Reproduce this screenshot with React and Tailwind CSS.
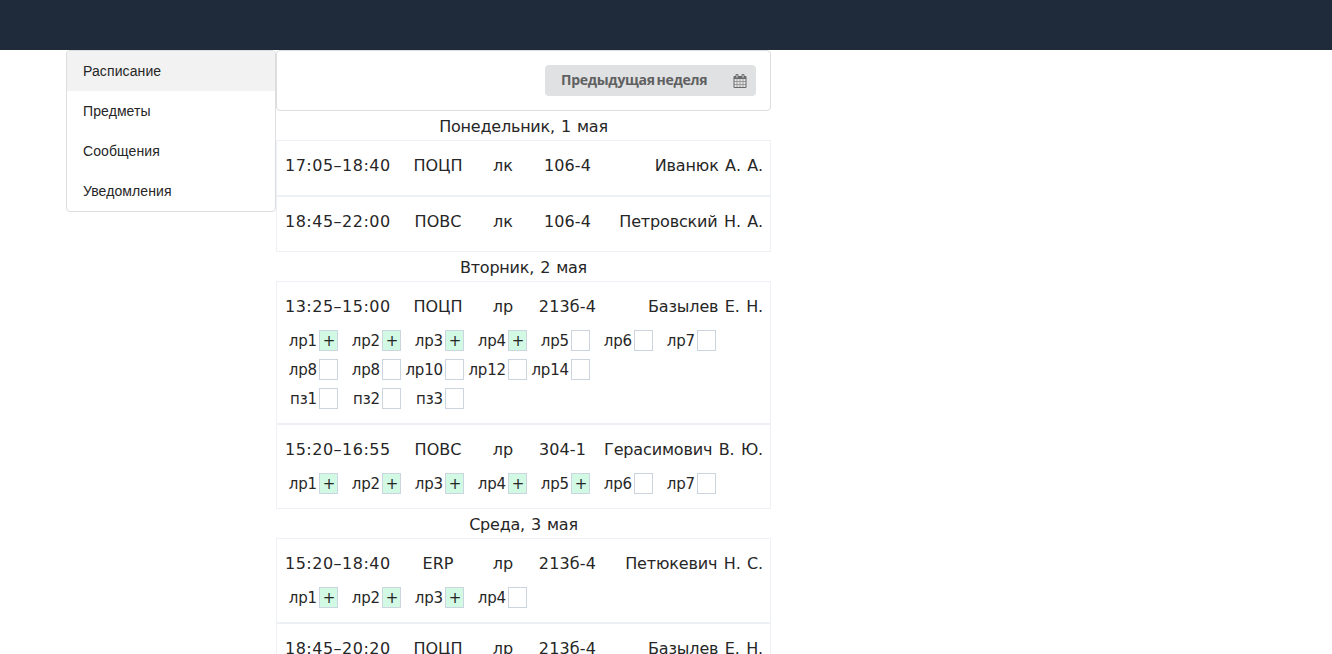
const CALENDAR =
  'M192 1664h288v-288h-288v288zm352 0h320v-288h-320v288zm-352-352h288v-320h-288v320zm352 0h320v-320h-320v320zm-352-384h288v-288h-288v288zm736 736h320v-288h-320v288zm-384-736h320v-288h-320v288zm768 736h288v-288h-288v288zm-384-352h320v-320h-320v320zm-352-864v-288q0-13-9.500-22.500t-22.500-9.500h-64q-13 0-22.500 9.500t-9.500 22.500v288q0 13 9.500 22.500t22.500 9.500h64q13 0 22.500-9.500t9.500-22.500zm736 864h288v-320h-288v320zm-384-384h320v-288h-320v288zm384 0h288v-288h-288v288zm32-480v-288q0-13-9.500-22.500t-22.500-9.500h-64q-13 0-22.500 9.500t-9.500 22.500v288q0 13 9.500 22.500t22.500 9.500h64q13 0 22.500-9.500t9.500-22.500zm384-64v1280q0 52-38 90t-90 38h-1408q-52 0-90-38t-38-90v-1280q0-52 38-90t90-38h128v-96q0-66 47-113t113-47h64q66 0 113 47t47 113v96h384v-96q0-66 47-113t113-47h64q66 0 113 47t47 113v96h128q52 0 90 38t38 90z';

const MENU = ['Расписание', 'Предметы', 'Сообщения', 'Уведомления'];

const DAYS = [
  {
    title: 'Понедельник, 1 мая',
    lessons: [
      { time: '17:05–18:40', subject: 'ПОЦП', type: 'лк', room: '106-4', teacher: 'Иванюк А. А.' },
      { time: '18:45–22:00', subject: 'ПОВС', type: 'лк', room: '106-4', teacher: 'Петровский Н. А.' },
    ],
  },
  {
    title: 'Вторник, 2 мая',
    lessons: [
      {
        time: '13:25–15:00', subject: 'ПОЦП', type: 'лр', room: '213б-4', teacher: 'Базылев Е. Н.',
        works: [
          ['лр1+', 'лр2+', 'лр3+', 'лр4+', 'лр5', 'лр6', 'лр7'],
          ['лр8', 'лр8', 'лр10', 'лр12', 'лр14'],
          ['пз1', 'пз2', 'пз3'],
        ],
      },
      {
        time: '15:20–16:55', subject: 'ПОВС', type: 'лр', room: '304-1', teacher: 'Герасимович В. Ю.', narrow: true,
        works: [['лр1+', 'лр2+', 'лр3+', 'лр4+', 'лр5+', 'лр6', 'лр7']],
      },
    ],
  },
  {
    title: 'Среда, 3 мая',
    lessons: [
      {
        time: '15:20–18:40', subject: 'ERP', type: 'лр', room: '213б-4', teacher: 'Петюкевич Н. С.',
        works: [['лр1+', 'лр2+', 'лр3+', 'лр4']],
      },
      { time: '18:45–20:20', subject: 'ПОЦП', type: 'лр', room: '213б-4', teacher: 'Базылев Е. Н.' },
    ],
  },
];

function Work({ value }) {
  const done = value.endsWith('+');
  return (
    <div className="flex h-[21px] w-[61px] shrink-0 items-center justify-end gap-[2px] whitespace-nowrap text-[15px] leading-[21px]">
      <span className="pt-[2px] tracking-[-0.15px]">{done ? value.slice(0, -1) : value}</span>
      <span className={`h-[21px] w-[19px] shrink-0 border border-[#cbd5e0] pl-px text-center leading-[21px] ${done ? 'bg-[#d2f9e3]' : 'bg-white'}`}>
        {done ? '+' : ''}
      </span>
    </div>
  );
}

function Lesson({ lesson }) {
  return (
    <div className={`border border-[#edf0f5] pt-[13px] ${lesson.works ? 'pb-[14px]' : 'pb-[17px]'}`}>
      <div className="flex h-6 items-center whitespace-nowrap pl-2 pr-[7px] leading-6">
        <span className="w-[107px] shrink-0 tracking-[0.5px]">{lesson.time}</span>
        <span className="ml-[14px] w-16 shrink-0 text-center">{lesson.subject}</span>
        <span className="ml-[17px] w-8 shrink-0 text-center">{lesson.type}</span>
        <span className={`ml-[19px] shrink-0 text-center tracking-[0.15px] ${lesson.narrow ? 'w-[49px]' : 'w-[59px]'}`}>{lesson.room}</span>
        <span className="ml-auto tracking-[-0.15px] [word-spacing:1.5px]">{lesson.teacher}</span>
      </div>
      {lesson.works && (
        <div className="mt-[11px] flex flex-col gap-2">
          {lesson.works.map((row, i) => (
            <div key={i} className="flex h-[21px] gap-[2px]">
              {row.map((value, j) => <Work key={j} value={value} />)}
            </div>
          ))}
        </div>
      )}
    </div>
  );
}

export default function App() {
  return (
    <div className="h-[654px] w-full overflow-hidden bg-white text-[#262626]">
      <header className="h-[50px] bg-[#1f2b3a]" />
      <div className="flex items-start pl-[66px]">
        <nav className="w-[210px] shrink-0 overflow-hidden rounded border border-[#dcddde] font-['Liberation_Sans',sans-serif] text-sm tracking-[0.1px]">
          {MENU.map((label, i) => (
            <a key={label} className={`flex h-10 items-center px-4 ${i === 0 ? 'bg-[#f2f2f2]' : ''}`}>
              {label}
            </a>
          ))}
        </nav>
        <main className="w-[495px] shrink-0 font-['DejaVu_Sans',sans-serif] text-base">
          <div className="flex h-[61px] items-start justify-end rounded border border-[#dcddde] p-[14px]">
            <button className="flex h-[31px] w-[211px] items-center justify-between whitespace-nowrap rounded bg-[#e0e1e2] pl-4 pr-[9px] font-['Open_Sans',sans-serif] text-sm font-bold text-[#5f6061]">
              <span className="pb-0.5 tracking-[-0.28px] [word-spacing:-1.5px]">Предыдущая неделя</span>
              <svg viewBox="0 0 1792 1792" className="size-[14px] fill-[#69696a]">
                <path d={CALENDAR} />
              </svg>
            </button>
          </div>
          {DAYS.map((day) => (
            <section key={day.title}>
              <h2 className="h-[29px] text-center leading-[32px] tracking-[-0.22px] [word-spacing:1.2px]">{day.title}</h2>
              {day.lessons.map((lesson) => <Lesson key={lesson.time} lesson={lesson} />)}
            </section>
          ))}
        </main>
      </div>
    </div>
  );
}
